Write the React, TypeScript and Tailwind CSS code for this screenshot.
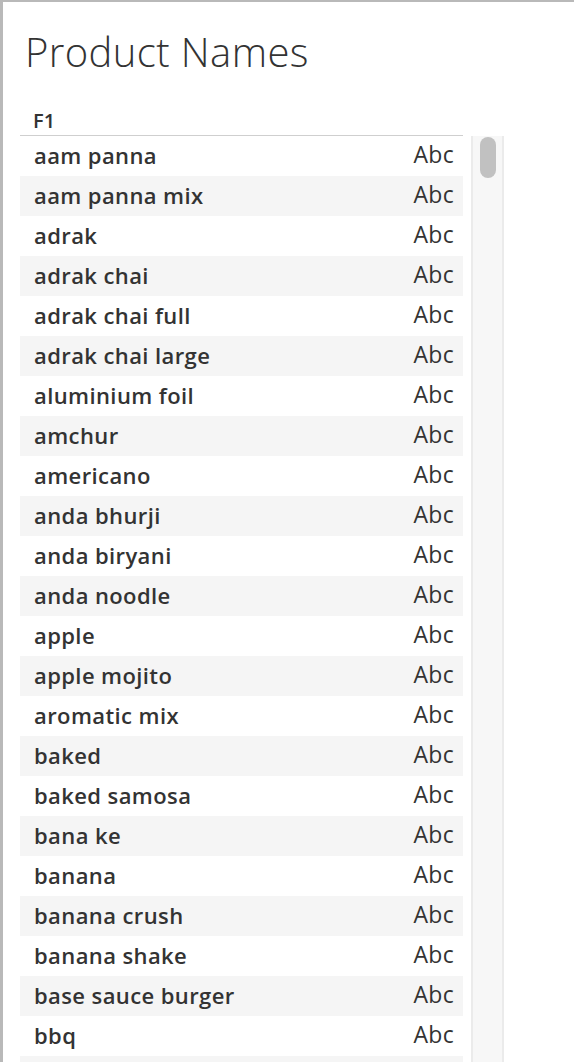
const names = [
  'aam panna',
  'aam panna mix',
  'adrak',
  'adrak chai',
  'adrak chai full',
  'adrak chai large',
  'aluminium foil',
  'amchur',
  'americano',
  'anda bhurji',
  'anda biryani',
  'anda noodle',
  'apple',
  'apple mojito',
  'aromatic mix',
  'baked',
  'baked samosa',
  'bana ke',
  'banana',
  'banana crush',
  'banana shake',
  'base sauce burger',
  'bbq',
];

const App = () => {
  return (
    <div className="w-[574px] h-[1062px] overflow-hidden bg-white border-t-2 border-l-[3px] border-[#b9b9b9] font-['Open_Sans',sans-serif] text-[#333333]">
      <div className="pl-[22px] pt-[24px]">
        <h1 className="text-[40px] font-light leading-[52px] text-[#333333] tracking-[0.4px]">Product Names</h1>
      </div>

      <div className="flex pl-[17px] mt-[28px]">
        <div className="w-[443px] flex flex-col">
          {/* header */}
          <div className="h-[30px] px-[13px] border-b border-[#cfcfcf] flex items-center">
            <span className="text-[20px] font-semibold leading-none text-[#333]">F1</span>
          </div>
          {/* rows */}
          {names.map((n, i) => (
            <div
              key={n}
              className={`h-[40px] flex items-center justify-between pl-[14px] pr-[9px] ${i % 2 === 1 ? 'bg-[#f5f5f5]' : 'bg-white'}`}
            >
              <span className="text-[22px] font-semibold tracking-[0.4px] text-[#333] mb-[2px]">{n}</span>
              <span className="text-[23px] font-normal tracking-[0.3px] text-[#333] mb-[3px]">Abc</span>
            </div>
          ))}
          <div className="h-[40px] bg-[#f5f5f5]" />
        </div>

        {/* scrollbar */}
        <div className="ml-[8px] mt-[30px] w-[33px] h-[960px] bg-[#f7f7f7] border-x-[2px] border-[#ebebeb] pt-[1px] flex justify-center">
          <div className="w-[16px] h-[41px] rounded-full bg-[#c1c1c1]" />
        </div>
      </div>
    </div>
  );
};

export default App;
